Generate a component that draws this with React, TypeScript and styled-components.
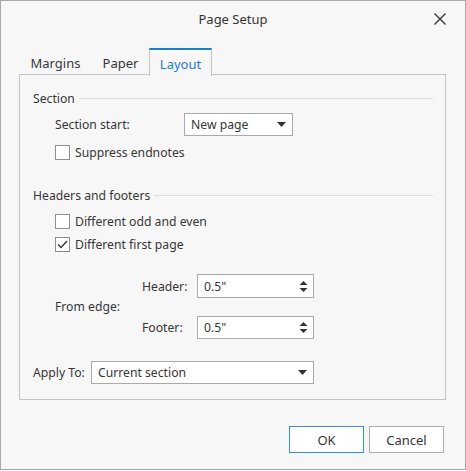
import styled, { createGlobalStyle } from "styled-components";

const GlobalStyle = createGlobalStyle`
  html, body {
    margin: 0;
    padding: 0;
    background: #ffffff;
  }
  body {
    font-family: "Noto Sans", "Open Sans", sans-serif;
    font-size: 12.2px;
    color: #363636;
  }
`;

const Window = styled.div`
  width: 466px;
  height: 470px;
  box-sizing: border-box;
  border: 1px solid #a8a8a8;
  background: #f7f7f7;
  display: flex;
  flex-direction: column;
`;

const TitleBar = styled.div`
  height: 36px;
  display: flex;
  align-items: center;
  justify-content: center;
  position: relative;
  font-size: 13px;
  color: #333;
`;

const CloseBtn = styled.div`
  position: absolute;
  right: 19px;
  top: 12px;
  width: 12px;
  height: 12px;
  display: flex;
`;

const Body = styled.div`
  padding: 11px 19px 0 18px;
  display: flex;
  flex-direction: column;
`;

const TabStrip = styled.div`
  display: flex;
  height: 27px;
  position: relative;
  z-index: 1;
`;

const Tab = styled.div<{ $active?: boolean; $w: number }>`
  width: ${(p) => p.$w}px;
  box-sizing: border-box;
  display: flex;
  align-items: center;
  justify-content: center;
  padding-top: 2px;
  height: ${(p) => (p.$active ? 28 : 27)}px;
  font-size: 13px;
  color: ${(p) => (p.$active ? "#1a7dd1" : "#363636")};
  background: ${(p) => (p.$active ? "#f7f7f7" : "transparent")};
  border: ${(p) => (p.$active ? "1px solid #c4c4c4" : "none")};
  border-top: ${(p) => (p.$active ? "2px solid #1a7dd1" : "none")};
  border-bottom: none;
`;

const Panel = styled.div`
  height: 326px;
  box-sizing: border-box;
  border: 1px solid #c4c4c4;
  margin-top: -1px;
  padding: 14px 12px 0 13px;
  display: flex;
  flex-direction: column;
`;

const GroupHeader = styled.div<{ $mt: number }>`
  display: flex;
  align-items: center;
  height: 18px;
  margin-top: ${(p) => p.$mt}px;
  gap: 4px;
  &::after {
    content: "";
    flex: 1;
    height: 1px;
    background: #dcdcdc;
  }
`;

const FieldRow = styled.div<{ $mt: number; $indent?: number }>`
  display: flex;
  align-items: center;
  height: 23px;
  margin-top: ${(p) => p.$mt}px;
  padding-left: ${(p) => p.$indent ?? 0}px;
`;

const Label = styled.span<{ $w?: number }>`
  width: ${(p) => (p.$w ? `${p.$w}px` : "auto")};
  flex-shrink: 0;
`;

const Combo = styled.div<{ $w: number; $h?: number }>`
  width: ${(p) => p.$w}px;
  height: ${(p) => p.$h ?? 23}px;
  box-sizing: border-box;
  border: 1px solid #ababab;
  background: #ffffff;
  display: flex;
  align-items: center;
  padding: 0 6px;
  justify-content: space-between;
`;

const CheckRow = styled.label<{ $mt: number }>`
  display: flex;
  align-items: center;
  height: 18px;
  margin-top: ${(p) => p.$mt}px;
  padding-left: 22px;
  gap: 5px;
`;

const Box = styled.span`
  width: 15px;
  height: 15px;
  box-sizing: border-box;
  border: 1px solid #8f8f8f;
  background: #ffffff;
  display: flex;
  align-items: center;
  justify-content: center;
`;

const EdgeGrid = styled.div`
  margin-top: 21px;
  display: grid;
  grid-template-columns: 87px 55px 117px;
  grid-template-rows: 24px 23px;
  row-gap: 18px;
  align-items: center;
  padding-left: 22px;
`;

const EdgeLabel = styled.span`
  grid-row: 1 / span 2;
  grid-column: 1;
  align-self: center;
`;

const Spin = styled(Combo)`
  padding-right: 5px;
`;

const Footer = styled.div`
  display: flex;
  justify-content: flex-end;
  gap: 5px;
  padding: 26px 21px 0 0;
`;

const Button = styled.div<{ $default?: boolean }>`
  width: 75px;
  height: 27px;
  box-sizing: border-box;
  border: 1px solid ${(p) => (p.$default ? "#3c8fd6" : "#adadad")};
  background: #ffffff;
  display: flex;
  align-items: center;
  justify-content: center;
  font-size: 13px;
`;

const Arrow = () => (
  <svg width="9" height="5" viewBox="0 0 9 5">
    <path d="M0 0 H9 L4.5 5 Z" fill="#333" />
  </svg>
);

const SpinArrows = () => (
  <svg width="9" height="13" viewBox="0 0 9 13">
    <path d="M0.5 5 H8.5 L4.5 1 Z" fill="#333" />
    <path d="M0.5 8 H8.5 L4.5 12 Z" fill="#333" />
  </svg>
);

const Check = ({ on }: { on?: boolean }) => (
  <Box>
    {on && (
      <svg width="11" height="9" viewBox="0 0 11 9">
        <path d="M1 4.5 L4 7.5 L10 1" fill="none" stroke="#333" strokeWidth="1.4" />
      </svg>
    )}
  </Box>
);

export default function App() {
  return (
    <Window>
      <GlobalStyle />
      <TitleBar>
        Page Setup
        <CloseBtn>
          <svg width="12" height="12" viewBox="0 0 12 12">
            <path d="M0.5 0.5 L11.5 11.5 M11.5 0.5 L0.5 11.5" stroke="#333" strokeWidth="1.3" />
          </svg>
        </CloseBtn>
      </TitleBar>
      <Body>
        <TabStrip>
          <Tab $w={73}>Margins</Tab>
          <Tab $w={57}>Paper</Tab>
          <Tab $w={63} $active>Layout</Tab>
        </TabStrip>
        <Panel>
          <GroupHeader $mt={0}>Section</GroupHeader>
          <FieldRow $mt={6} $indent={22}>
            <Label $w={129}>Section start:</Label>
            <Combo $w={109}>
              <span>New page</span>
              <Arrow />
            </Combo>
          </FieldRow>
          <CheckRow $mt={7}>
            <Check />
            Suppress endnotes
          </CheckRow>
          <GroupHeader $mt={25}>Headers and footers</GroupHeader>
          <CheckRow $mt={8}>
            <Check />
            Different odd and even
          </CheckRow>
          <CheckRow $mt={5}>
            <Check on />
            Different first page
          </CheckRow>
          <EdgeGrid>
            <EdgeLabel>From edge:</EdgeLabel>
            <Label style={{ gridRow: 1, gridColumn: 2 }}>Header:</Label>
            <Spin $w={117} $h={24} style={{ gridRow: 1, gridColumn: 3 }}>
              <span>0.5"</span>
              <SpinArrows />
            </Spin>
            <Label style={{ gridRow: 2, gridColumn: 2 }}>Footer:</Label>
            <Spin $w={117} style={{ gridRow: 2, gridColumn: 3 }}>
              <span>0.5"</span>
              <SpinArrows />
            </Spin>
          </EdgeGrid>
          <FieldRow $mt={22}>
            <Label $w={58}>Apply To:</Label>
            <Combo $w={223}>
              <span>Current section</span>
              <Arrow />
            </Combo>
          </FieldRow>
        </Panel>
      </Body>
      <Footer>
        <Button $default>OK</Button>
        <Button>Cancel</Button>
      </Footer>
    </Window>
  );
}
